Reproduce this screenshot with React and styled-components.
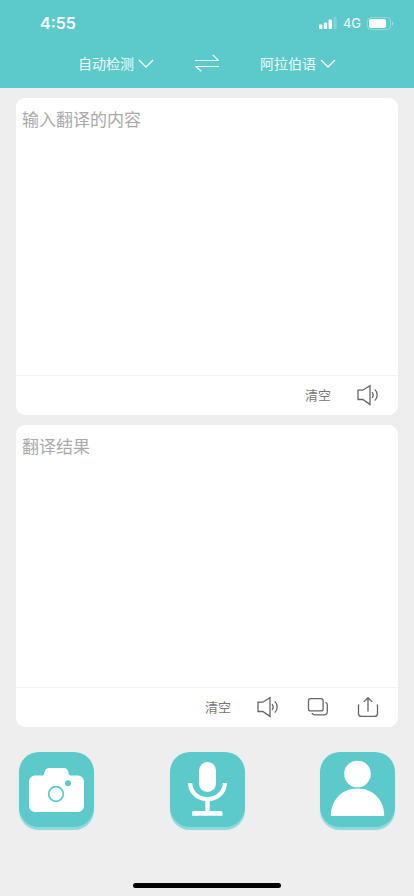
import React, { useState } from 'react';
import styled, { createGlobalStyle } from 'styled-components';

const LANGUAGES = ['自动检测', '阿拉伯语', '中文', '英语'];

function LanguageSelect({ label, value, onChange }) {
    return (
        <LanguageField>
            <select
                aria-label={label}
                value={value}
                onChange={(e) => onChange(e.target.value)}
            >
                {LANGUAGES.map((name) => (
                    <option key={name}>{name}</option>
                ))}
            </select>
            <Chevron viewBox="0 0 16 10">
                <path d="M1 1l7 7 7-7" />
            </Chevron>
        </LanguageField>
    );
}

function SpeakerIcon() {
    return (
        <ToolIcon viewBox="0 0 22 22">
            <path d="M1 6.2h4.8L13 1.6v18.8l-7.2-4.9H1z" />
            <path d="M15 8.1c1.4 1.7 1.4 4.1 0 5.8M17.8 5.4c3.2 3.2 3.2 8 0 11.2" />
        </ToolIcon>
    );
}

function CopyIcon() {
    return (
        <ToolIcon viewBox="0 0 22 22">
            <rect x="1.5" y="2.7" width="14.6" height="12.2" rx="2.2" />
            <path d="M18.4 6.3c1.3.3 1.9 1.2 1.9 2.4v6.8c0 2.2-1.2 3.3-3.4 3.3H8.2c-1.7 0-2.8-.7-3.3-1.9" />
        </ToolIcon>
    );
}

function ShareIcon() {
    return (
        <ToolIcon viewBox="0 0 22 22">
            <path d="M2.4 9.2h-.9v8.2c0 2 1 3 3 3h13c2 0 3-1 3-3V9.200h-.9" />
            <path d="M11 15.500V1.700M6.800 5.900L11 1.700l4.200 4.200" />
        </ToolIcon>
    );
}

function App() {
    const [from, setFrom] = useState('自动检测');
    const [to, setTo] = useState('阿拉伯语');
    const [text, setText] = useState('');
    const [result, setResult] = useState('');

    const swap = () => {
        setFrom(to);
        setTo(from);
    };

    return (
        <Page>
            <GlobalStyle />
            <Header>
                <StatusBar>
                    <Time>4:55</Time>
                    <Signal viewBox="0 0 18 12">
                        <rect x="0" y="7.5" width="3.4" height="4.5" rx="1" />
                        <rect x="4.8" y="5.5" width="3.4" height="6.5" rx="1" />
                        <rect x="9.6" y="2.5" width="3.4" height="9.5" rx="1" />
                        <rect x="14.4" y="0" width="3.4" height="12" rx="1" opacity=".2" />
                    </Signal>
                    <Network>4G</Network>
                    <Battery viewBox="0 0 27 13">
                        <rect x=".5" y=".5" width="23" height="12" rx="3.5" />
                        <rect x="2" y="2" width="17" height="9" rx="2" />
                        <path d="M25 4.5c1.8.5 1.8 3.5 0 4z" />
                    </Battery>
                </StatusBar>
                <LanguageBar>
                    <LanguageSelect label="源语言" value={from} onChange={setFrom} />
                    <SwapButton aria-label="交换语言" onClick={swap}>
                        <svg viewBox="0 0 24 18">
                            <path d="M0 6.5h23.5L17.8.8M24 12.5H.8l5.5 4.9" />
                        </svg>
                    </SwapButton>
                    <LanguageSelect label="目标语言" value={to} onChange={setTo} />
                </LanguageBar>
            </Header>

            <Main>
                <Card $grow={317}>
                    <TextBox
                        aria-label="原文"
                        placeholder="输入翻译的内容"
                        value={text}
                        onChange={(e) => setText(e.target.value)}
                    />
                    <Toolbar>
                        <ToolButton onClick={() => setText('')}>清空</ToolButton>
                        <ToolButton aria-label="朗读">
                            <SpeakerIcon />
                        </ToolButton>
                    </Toolbar>
                </Card>
                <Card $grow={302}>
                    <TextBox
                        aria-label="译文"
                        placeholder="翻译结果"
                        value={result}
                        readOnly
                    />
                    <Toolbar>
                        <ToolButton onClick={() => setResult('')}>清空</ToolButton>
                        <ToolButton aria-label="朗读">
                            <SpeakerIcon />
                        </ToolButton>
                        <ToolButton aria-label="复制">
                            <CopyIcon />
                        </ToolButton>
                        <ToolButton aria-label="分享">
                            <ShareIcon />
                        </ToolButton>
                    </Toolbar>
                </Card>
            </Main>

            <Actions>
                <ActionButton aria-label="拍照翻译">
                    <svg viewBox="0 0 75 75">
                        <path d="M17 23.500h6c1.500 0 2-.5 2.300-2l.5-2c.6-2.300 1.700-3.500 4-3.500h15.400c2.300 0 3.400 1.200 4 3.500l.5 2c.3 1.500.8 2 2.300 2h6c4.400 0 7 2.600 7 7V53c0 4.400-2.600 7-7 7H17c-4.400 0-7-2.600-7-7V30.500c0-4.400 2.600-7 7-7z" />
                        <circle className="line" cx="37" cy="42" r="7.3" />
                        <circle className="dot" cx="49" cy="31.3" r="3" />
                    </svg>
                </ActionButton>
                <ActionButton aria-label="语音翻译">
                    <svg viewBox="0 0 75 75">
                        <rect x="29" y="10" width="17" height="30" rx="8.5" />
                        <path d="M18 31h4.300a15.200 14 0 0 0 30.400 0H57a19.500 18.500 0 0 1-17.300 18.300V59H51a1.500 1.500 0 0 1 1.500 1.500v3.300H22v-3.300a1.500 1.500 0 0 1 1.500-1.500h11.800v-9.700A19.500 18.500 0 0 1 18 31z" />
                    </svg>
                </ActionButton>
                <ActionButton aria-label="个人中心">
                    <svg viewBox="0 0 75 75">
                        <circle cx="37.5" cy="22" r="13.3" />
                        <path d="M10.8 64C10.8 47.5 22.5 36.5 37.5 36.5S64.200 47.5 64.200 64z" />
                    </svg>
                </ActionButton>
            </Actions>
            <HomeIndicator />
        </Page>
    );
}

export default App;

const GlobalStyle = createGlobalStyle`
    * {
        box-sizing: border-box;
    }
    body {
        margin: 0;
        background: #eeeeee;
    }
    body, button, select, textarea {
        font-family: "Noto Sans CJK SC", sans-serif;
    }
    button {
        border: 0;
        padding: 0;
        background: none;
        cursor: pointer;
    }
`;

const Page = styled.div`
    min-height: 100vh;
    display: flex;
    flex-direction: column;
`;

const Header = styled.header`
    background: #5ccacb;
    color: white;
`;

const StatusBar = styled.div`
    height: 44px;
    padding: 2px 20px 0 40px;
    display: flex;
    align-items: center;
`;

const Time = styled.span`
    margin-right: auto;
    font: 600 16px Inter, sans-serif;
`;

const Signal = styled.svg`
    width: 18px;
    height: 12px;
    fill: white;
`;

const Network = styled.span`
    margin: 0 6px;
    font: 400 13px Inter, sans-serif;
`;

const Battery = styled.svg`
    width: 27px;
    height: 13px;
    fill: white;

    rect:first-child {
        fill: none;
        stroke: white;
        opacity: 0.3;
    }
    path {
        opacity: 0.4;
    }
`;

const LanguageBar = styled.nav`
    height: 44px;
    padding-bottom: 6px;
    display: flex;
    justify-content: center;
    align-items: center;
    gap: 41px;
`;

const LanguageField = styled.div`
    position: relative;
    width: 76px;

    select {
        appearance: none;
        display: block;
        width: 100%;
        height: 24px;
        padding: 0 20px 0 0;
        border: 0;
        background: none;
        color: #f0fafa;
        font-size: 14px;
    }
    option {
        color: #333333;
    }
`;

const Chevron = styled.svg`
    position: absolute;
    right: 0;
    top: 8px;
    width: 16px;
    height: 10px;
    fill: none;
    stroke: white;
    stroke-width: 1.3;
    pointer-events: none;
`;

const SwapButton = styled.button`
    svg {
        display: block;
        width: 24px;
        height: 18px;
        fill: none;
        stroke: white;
        stroke-width: 1.2;
    }
`;

const Main = styled.main`
    flex: 1;
    padding: 10px 16px 0;
    display: flex;
    flex-direction: column;
    gap: 10px;
`;

const Card = styled.section`
    flex: ${(props) => props.$grow} 1 0;
    min-height: 160px;
    display: flex;
    flex-direction: column;
    background: white;
    border-radius: 9px;
    overflow: hidden;
`;

const TextBox = styled.textarea`
    flex: 1;
    width: 100%;
    padding: 9px 6px;
    border: 0;
    outline: 0;
    resize: none;
    background: none;
    color: #333333;
    font-size: 17px;
    line-height: 24px;

    &::placeholder {
        color: #a9a9a9;
    }
`;

const Toolbar = styled.div`
    height: 40px;
    padding: 0 5px 2px 0;
    display: flex;
    justify-content: flex-end;
    border-top: 1px solid #f2f2f2;
`;

const ToolButton = styled.button`
    width: 50px;
    display: flex;
    justify-content: center;
    align-items: center;
    color: #777777;
    font-size: 13px;
`;

const ToolIcon = styled.svg`
    width: 22px;
    height: 22px;
    fill: none;
    stroke: #666666;
    stroke-width: 1.3;
`;

const Actions = styled.footer`
    padding: 25px 19px 0;
    display: flex;
    justify-content: space-between;
`;

const ActionButton = styled.button`
    width: 75px;
    height: 75px;
    border-radius: 20px;
    background: #5ccacb;
    box-shadow: 0 3px 1px #8ed9da;

    svg {
        display: block;
        fill: white;
    }
    .line {
        fill: none;
        stroke: #5ccacb;
        stroke-width: 1.8;
    }
    .dot {
        fill: #5ccacb;
    }
`;

const HomeIndicator = styled.div`
    width: 148px;
    height: 5px;
    margin: 56px auto 8px;
    border-radius: 3px;
    background: black;
`;
